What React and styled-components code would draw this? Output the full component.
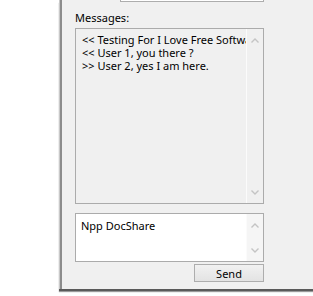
import React from 'react'
import styled, { createGlobalStyle } from 'styled-components'

const GlobalStyle = createGlobalStyle`
  html, body {
    margin: 0;
    background: #fff;
  }
  body {
    font-family: 'Noto Sans', 'Open Sans', sans-serif;
    font-size: 11px;
    color: #000;
  }
`

const Page = styled.div`
  display: flex;
  height: 296px;
  overflow: hidden;
`

const Gutter = styled.div`
  width: 59px;
  flex-shrink: 0;
  background: #fff;
`

const Window = styled.div`
  flex: 1;
  min-width: 0;
  height: 289px;
  display: flex;
  flex-direction: column;
  background: #f0f0f0;
  border-left: 1px solid #c8c8c8;
  box-shadow: inset 2px 0 0 #8c8c8c, 0 2px 0 #5a5a5a, 0 3px 1px #9a9a9a;
  padding: 0 49px 0 15px;
`

const TopField = styled.div`
  margin-left: 45px;
  height: 1px;
  background: #fff;
  border: 1px solid #adadad;
  border-top: none;
`

const Label = styled.div`
  margin-top: 8px;
  line-height: 15px;
`

const Field = styled.div`
  display: flex;
  height: ${p => p.$height}px;
  margin-top: ${p => p.$gap}px;
  background: ${p => (p.$readOnly ? '#f0f0f0' : '#fff')};
  border: 1px solid #ababab;
  box-sizing: border-box;
`

const Lines = styled.div`
  flex: 1;
  min-width: 0;
  overflow: hidden;
  white-space: nowrap;
  padding: ${p => p.$pad};
  line-height: 13px;
`

const ScrollBar = styled.div`
  width: 17px;
  flex-shrink: 0;
  display: flex;
  flex-direction: column;
  justify-content: space-between;
  align-items: center;
  background: ${p => (p.$readOnly ? '#f0f0f0' : '#f5f5f5')};
  border-left: 1px solid #fbfbfb;
  padding: 9px 0 8px;
  box-sizing: border-box;
`

const Button = styled.button`
  align-self: flex-end;
  width: 70px;
  height: 18px;
  margin-top: 2px;
  padding: 0;
  border: 1px solid #adadad;
  border-radius: 0;
  background: linear-gradient(#f1f1f1, #e3e3e3);
  font: inherit;
  line-height: 15px;
  color: #000;
`

const Chevron = ({ up }) => (
  <svg width="8" height="5" viewBox="0 0 8 5">
    <path
      d={up ? 'M0.5 4.5 L4 1 L7.5 4.5' : 'M0.5 0.5 L4 4 L7.5 0.5'}
      fill="none"
      stroke="#c4c4c4"
      strokeWidth="1.4"
    />
  </svg>
)

const messages = [
  '<< Testing For I Love Free Software',
  '<< User 1, you there ?',
  '>> User 2, yes I am here.',
]

export default function App() {
  return (
    <>
      <GlobalStyle />
      <Page>
        <Gutter />
        <Window>
          <TopField />
          <Label>Messages:</Label>
          <Field $height={176} $gap={3} $readOnly>
            <Lines $pad="4px 0 0 6px">
              {messages.map(m => (
                <div key={m}>{m}</div>
              ))}
            </Lines>
            <ScrollBar $readOnly>
              <Chevron up />
              <Chevron />
            </ScrollBar>
          </Field>
          <Field $height={49} $gap={9}>
            <Lines $pad="5px 0 0 5px">Npp DocShare</Lines>
            <ScrollBar>
              <Chevron up />
              <Chevron />
            </ScrollBar>
          </Field>
          <Button>Send</Button>
        </Window>
      </Page>
    </>
  )
}
